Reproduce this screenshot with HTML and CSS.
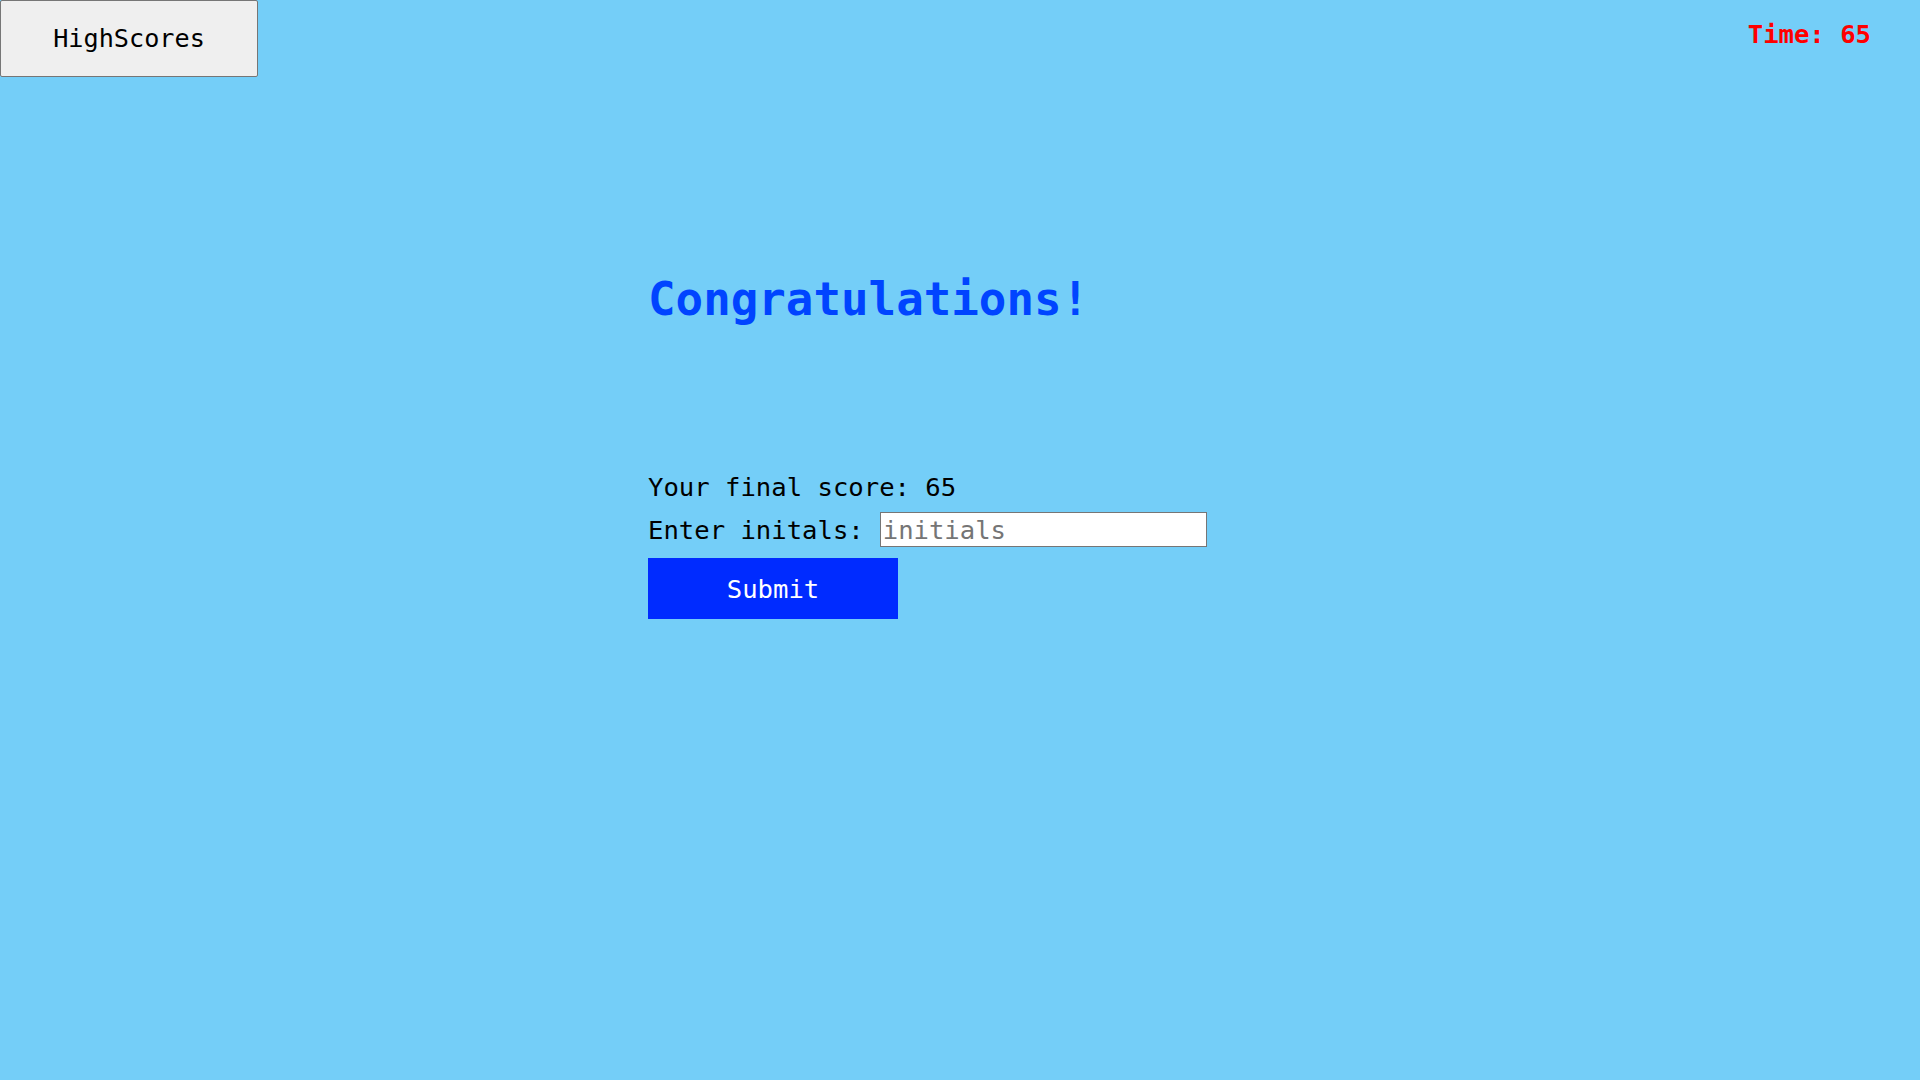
FILE: index.html
```html
<!DOCTYPE html>
<html lang="en">
<head>
<meta charset="utf-8">
<title>Quiz</title>
<link rel="stylesheet" href="styles.css">
</head>
<body>
<header class="top-bar">
  <button class="highscores-btn">HighScores</button>
  <div class="timer">Time: 65</div>
</header>
<main class="quiz">
  <h1 class="title">Congratulations!</h1>
  <p class="final-score">Your final score: 65</p>
  <div class="initials-row">
    <label class="initials-label" for="initials">Enter initals:</label>
    <input class="initials-input" id="initials" type="text" placeholder="initials">
  </div>
  <button class="submit-btn">Submit</button>
</main>
</body>
</html>
```
FILE: styles.css
```css
html, body {
  margin: 0;
  padding: 0;
}
body {
  background: #74cef8;
  font-family: "DejaVu Sans Mono", "Liberation Mono", monospace;
  font-size: 25.6px;
  color: #000;
  min-height: 1080px;
}
.top-bar {
  display: flex;
  justify-content: space-between;
  align-items: flex-start;
}
.highscores-btn {
  width: 258px;
  height: 77px;
  margin: 0;
  background: #efefef;
  border: 1px solid #767676;
  border-radius: 2px;
  font-family: inherit;
  font-size: 25.2px;
  color: #000;
  padding: 0;
}
.timer {
  margin-top: 19px;
  margin-right: 49px;
  line-height: 30px;
  font-weight: bold;
  color: #ff0000;
}
.quiz {
  width: 624px;
  margin: 0 auto;
  padding-top: 196px;
}
.title {
  margin: 0;
  font-size: 45.8px;
  line-height: 52px;
  font-weight: bold;
  color: #0044ff;
}
.final-score {
  margin: 147px 0 0 0;
  line-height: 30px;
}
.initials-row {
  display: flex;
  align-items: center;
  gap: 16px;
  margin-top: 10px;
}
.initials-label {
  line-height: 30px;
}
.initials-input {
  box-sizing: border-box;
  width: 327px;
  height: 35px;
  margin: 0;
  padding: 1px 2px;
  border: 1px solid #767676;
  border-radius: 0;
  background: #fff;
  font-family: inherit;
  font-size: 25.6px;
  color: #000;
}
.initials-input::placeholder {
  color: #757575;
}
.submit-btn {
  display: block;
  width: 250px;
  height: 61px;
  margin-top: 11px;
  background: #002bff;
  color: #fff;
  border: none;
  font-family: inherit;
  font-size: 25.6px;
  padding: 0;
}
```
